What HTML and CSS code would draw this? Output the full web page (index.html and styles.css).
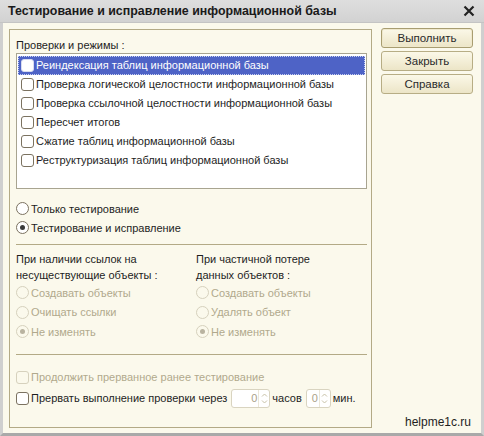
FILE: index.html
```html
<!DOCTYPE html>
<html>
<head>
<meta charset="utf-8">
<link rel="stylesheet" href="styles.css">
</head>
<body>
<div class="window">
  <div class="titlebar">
    <span class="title">Тестирование и исправление информационной базы</span>
    <svg class="close" width="12" height="12" viewBox="0 0 12 12"><path d="M1.5 1.5L10.5 10.5M10.5 1.5L1.5 10.5" stroke="#222" stroke-width="2.2"/></svg>
  </div>
  <div class="body">
    <div class="group">
      <div class="caption">Проверки и режимы :</div>
      <div class="list">
        <div class="row sel"><span class="cb"></span>Реиндексация таблиц информационной базы</div>
        <div class="row"><span class="cb"></span>Проверка логической целостности информационной базы</div>
        <div class="row"><span class="cb"></span>Проверка ссылочной целостности информационной базы</div>
        <div class="row"><span class="cb"></span>Пересчет итогов</div>
        <div class="row"><span class="cb"></span>Сжатие таблиц информационной базы</div>
        <div class="row"><span class="cb"></span>Реструктуризация таблиц информационной базы</div>
      </div>
      <div class="modes">
        <div class="opt"><span class="rb"></span>Только тестирование</div>
        <div class="opt"><span class="rb on"></span>Тестирование и исправление</div>
      </div>
      <div class="sep"></div>
      <div class="cols">
        <div class="col">
          <div class="hdr">При наличии ссылок на<br>несуществующие объекты :</div>
          <div class="opt dis"><span class="rb"></span>Создавать объекты</div>
          <div class="opt dis"><span class="rb"></span>Очищать ссылки</div>
          <div class="opt dis"><span class="rb on"></span>Не изменять</div>
        </div>
        <div class="col">
          <div class="hdr">При частичной потере<br>данных объектов :</div>
          <div class="opt dis"><span class="rb"></span>Создавать объекты</div>
          <div class="opt dis"><span class="rb"></span>Удалять объект</div>
          <div class="opt dis"><span class="rb on"></span>Не изменять</div>
        </div>
      </div>
      <div class="sep sep2"></div>
      <div class="opt dis cont"><span class="cb"></span>Продолжить прерванное ранее тестирование</div>
      <div class="opt stop"><span class="cb"></span>Прервать выполнение проверки через
        <span class="spin w1"><span class="val">0</span><span class="arr"><svg width="9" height="17" viewBox="0 0 9 17"><path d="M2 6.5L4.5 4L7 6.5M2 10.5L4.5 13L7 10.5" fill="none" stroke="#c8c2a8" stroke-width="1"/></svg></span></span>
        <span class="unit">часов</span>
        <span class="spin w2"><span class="val">0</span><span class="arr"><svg width="9" height="17" viewBox="0 0 9 17"><path d="M2 6.5L4.5 4L7 6.5M2 10.5L4.5 13L7 10.5" fill="none" stroke="#c8c2a8" stroke-width="1"/></svg></span></span>
        <span class="unit">мин.</span>
      </div>
    </div>
    <div class="side">
      <div class="buttons">
        <div class="btn def">Выполнить</div>
        <div class="btn">Закрыть</div>
        <div class="btn">Справка</div>
      </div>
      <div class="brand">helpme1c.ru</div>
    </div>
  </div>
</div>
</body>
</html>
```
FILE: styles.css
```css
html, body {
  margin: 0;
  padding: 0;
}
body {
  width: 484px;
  height: 436px;
  font-family: "Liberation Sans", Arial, sans-serif;
  font-size: 11px;
  color: #1e1e1e;
  overflow: hidden;
}
.window {
  width: 484px;
  height: 436px;
  box-sizing: border-box;
  background: #fbf9ec;
  border-left: 3px solid #cfcfcf;
  border-right: 3px solid #cfcfcf;
  border-bottom: 3px solid #a9a9a9;
  display: flex;
  flex-direction: column;
}
.titlebar {
  height: 22px;
  margin: 0 -3px;
  padding: 0 9px 0 8px;
  background: linear-gradient(#dedede, #d2d2d2);
  border-bottom: 1px solid #c4c4c4;
  display: flex;
  align-items: center;
  justify-content: space-between;
  flex-shrink: 0;
}
.title {
  font-weight: bold;
  font-size: 12.4px;
  color: #1a1a1a;
}
.close {
  display: block;
}
.body {
  flex: 1;
  display: flex;
  padding: 6px 0 0 6px;
}
.group {
  width: 363px;
  height: 399px;
  flex-shrink: 0;
  box-sizing: border-box;
  border: 1px solid #b3aa86;
  padding: 7px 6px 0 6px;
}
.caption {
  height: 16px;
  line-height: 16px;
}
.list {
  width: 351px;
  height: 136px;
  box-sizing: border-box;
  background: #fff;
  border: 1px solid #a8a490;
  padding: 2px 1px 1px 1px;
}
.row {
  height: 19px;
  line-height: 19px;
  display: flex;
  align-items: center;
  padding-left: 3px;
  box-sizing: border-box;
  white-space: nowrap;
}
.row.sel {
  background: #4e63c6;
  color: #fff;
  outline: 1px dotted #c8d0f0;
  outline-offset: -1px;
}
.cb {
  width: 11px;
  height: 11px;
  border: 1px solid #7b7260;
  border-radius: 3px;
  background: #fff;
  margin-right: 2px;
  flex-shrink: 0;
}
.row.sel .cb {
  border-color: #d8dcf0;
}
.modes {
  margin-top: 10px;
}
.opt {
  height: 19px;
  display: flex;
  align-items: center;
  white-space: nowrap;
}
.rb {
  width: 11px;
  height: 11px;
  border: 1px solid #7b7260;
  border-radius: 50%;
  background: #fff;
  margin-right: 2px;
  position: relative;
  flex-shrink: 0;
}
.rb.on::after {
  content: "";
  position: absolute;
  left: 3px;
  top: 3px;
  width: 5px;
  height: 5px;
  border-radius: 50%;
  background: #3a3a3a;
}
.dis {
  color: #b1a98c;
}
.dis .rb, .dis .cb {
  border-color: #d6d1bd;
  background: #fbf9ec;
}
.dis .rb.on::after {
  background: #b9b3a0;
}
.sep {
  height: 1px;
  background: #b3aa86;
  margin: 7px 0 0 0;
  width: 351px;
}
.cols {
  display: flex;
  margin-top: 6px;
}
.col {
  width: 180px;
  flex-shrink: 0;
}
.col + .col {
  width: 171px;
}
.hdr {
  line-height: 16px;
}
.col .opt {
  height: 19.5px;
}
.sep2 {
  margin-top: 12px;
}
.cont {
  margin-top: 13px;
}
.stop {
  margin-top: 1px;
  height: 21px;
}
.spin {
  display: inline-flex;
  height: 19px;
  box-sizing: border-box;
  border: 1px solid #d9d4c0;
  border-radius: 3px;
  background: #fff;
  margin-left: 4px;
  align-items: center;
}
.spin.w1 { width: 39px; }
.spin.w2 { width: 25px; }
.val {
  flex: 1;
  text-align: right;
  color: #aaa28a;
  padding-right: 1px;
}
.arr {
  width: 10px;
  height: 17px;
  border-left: 1px solid #ebe7d8;
  display: flex;
  justify-content: center;
}
.arr svg { display: block; }
.unit {
  margin-left: 2px;
}
.side {
  flex: 1;
  display: flex;
  flex-direction: column;
  justify-content: space-between;
  padding: 0 8px 4px 9px;
}
.buttons {
  display: flex;
  flex-direction: column;
  gap: 3px;
  margin-top: -1px;
}
.btn {
  height: 20px;
  box-sizing: border-box;
  border: 1px solid #b7ad85;
  border-radius: 3px;
  background: linear-gradient(#fbf8e8, #ece5c7);
  text-align: center;
  line-height: 18px;
  font-size: 11.5px;
  color: #2a2a2a;
}
.btn.def {
  border-color: #a89d70;
  box-shadow: inset 0 0 0 1px #efe8cc;
}
.brand {
  text-align: right;
  font-size: 12px;
  color: #1e1e1e;
  padding-right: 2px;
}
```
